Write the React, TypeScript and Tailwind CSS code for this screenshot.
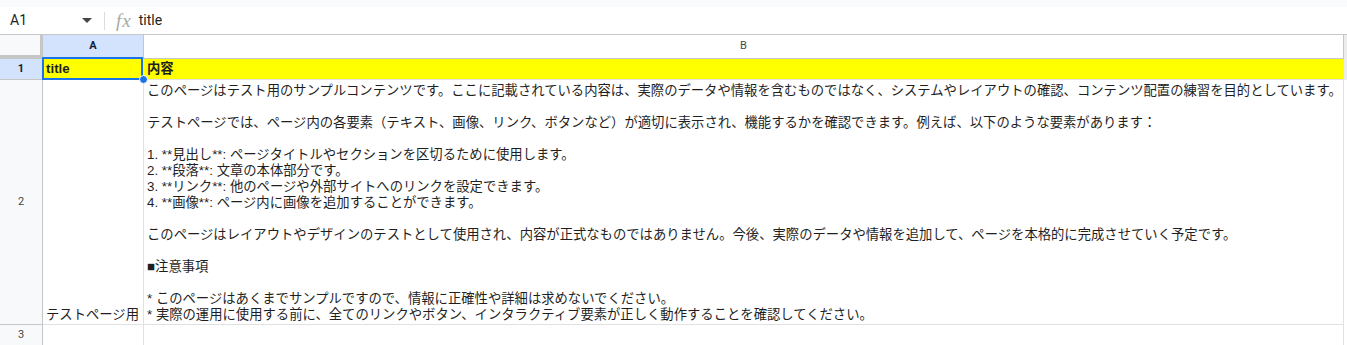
import React from "react";

const cellFont = "font-[family-name:'Liberation_Sans','Noto_Sans_CJK_JP',sans-serif]";

const bText = `このページはテスト用のサンプルコンテンツです。ここに記載されている内容は、実際のデータや情報を含むものではなく、システムやレイアウトの確認、コンテンツ配置の練習を目的としています。

テストページでは、ページ内の各要素（テキスト、画像、リンク、ボタンなど）が適切に表示され、機能するかを確認できます。例えば、以下のような要素があります：

1. **見出し**: ページタイトルやセクションを区切るために使用します。
2. **段落**: 文章の本体部分です。
3. **リンク**: 他のページや外部サイトへのリンクを設定できます。
4. **画像**: ページ内に画像を追加することができます。

このページはレイアウトやデザインのテストとして使用され、内容が正式なものではありません。今後、実際のデータや情報を追加して、ページを本格的に完成させていく予定です。

■注意事項

* このページはあくまでサンプルですので、情報に正確性や詳細は求めないでください。
* 実際の運用に使用する前に、全てのリンクやボタン、インタラクティブ要素が正しく動作することを確認してください。`;

export default function App() {
  return (
    <div className={`w-[1347px] h-[345px] overflow-hidden bg-white ${cellFont} text-[#1f1f1f]`}>
      <div className="h-[7px] bg-[#f9fbfd]" />
      {/* formula bar */}
      <div className="h-[28px] flex items-center border-b border-[#c7c7c7] bg-white">
        <div className="w-[98px] flex items-center pl-[10px] pr-[8px] justify-between">
          <span className="text-[14px] text-[#1f1f1f] font-[family-name:'Roboto','Liberation_Sans',sans-serif]">A1</span>
          <svg width="10" height="5" viewBox="0 0 10 5" className="mr-[-2px]">
            <path d="M0 0 L10 0 L5 5 Z" fill="#444746" />
          </svg>
        </div>
        <div className="w-px h-[18px] bg-[#dadce0] ml-[6px]" />
        <span className="ml-[11px] text-[19px] leading-[19px] italic text-[#a8a8a8] font-[family-name:'Liberation_Serif',serif] tracking-[1px]">fx</span>
        <span className="ml-[7px] text-[14px] text-[#1f1f1f] font-[family-name:'Roboto','Liberation_Sans',sans-serif]">title</span>
      </div>

      {/* column header row */}
      <div className="flex h-[24px]">
        <div className="w-[43px] shrink-0 bg-[#f8f9fa] border-r-[3px] border-b-[4px] border-[#c4c7c5]" />
        <div className="w-[101px] shrink-0 bg-[#d3e3fd] border-r border-b border-[#c4c7c5] flex items-center justify-center text-[11px] font-bold text-[#0b1f3a] font-[family-name:'Roboto','Liberation_Sans',sans-serif]">
          A
        </div>
        <div className="w-[1200px] shrink-0 bg-white border-r border-b border-[#c4c7c5] flex items-center justify-center text-[11px] text-[#444746] font-[family-name:'Roboto','Liberation_Sans',sans-serif]">
          B
        </div>
        <div className="flex-1 bg-[#ececec]" />
      </div>

      {/* row 1 */}
      <div className="flex h-[21px]">
        <div className="w-[43px] shrink-0 bg-[#d3e3fd] border-r border-b border-[#c4c7c5] flex items-center justify-center text-[11px] font-bold text-[#0b1f3a] font-[family-name:'Roboto','Liberation_Sans',sans-serif]">
          1
        </div>
        <div className="relative w-[101px] shrink-0 bg-[#ffff00] border-r border-b border-[#e1e1e1] flex items-end pl-[3px] pb-[2px] text-[13.33px] font-bold leading-[16px]">
          title
          <div className="absolute left-[-1px] top-[-2px] w-[101px] h-[23px] border-2 border-[#1a73e8]" />
          <div className="absolute right-[-5px] bottom-[-5px] w-[9px] h-[9px] rounded-full bg-[#1a73e8] border border-white z-10" />
        </div>
        <div className="w-[1200px] shrink-0 bg-[#ffff00] border-r border-b border-[#e1e1e1] flex items-end pl-[3px] pb-[2px] text-[13.33px] font-bold leading-[16px]">
          内容
        </div>
        <div className="flex-1 bg-[#ececec]" />
      </div>

      {/* row 2 */}
      <div className="flex h-[245px]">
        <div className="w-[43px] shrink-0 bg-[#f8f9fa] border-r border-b border-[#c4c7c5] flex items-center justify-center text-[11px] text-[#444746] font-[family-name:'Roboto','Liberation_Sans',sans-serif]">
          2
        </div>
        <div className="w-[101px] shrink-0 border-r border-b border-[#e1e1e1] flex items-end pl-[3px] pb-[1px] text-[13.33px] leading-[16px] whitespace-nowrap overflow-hidden">
          テストページ用
        </div>
        <div className="w-[1200px] shrink-0 border-r border-b border-[#e1e1e1] flex items-end pl-[3px] pb-[1px] text-[13.33px] leading-[16px] whitespace-pre overflow-hidden">
          {bText}
        </div>
        <div className="flex-1 bg-white" />
      </div>

      {/* row 3 */}
      <div className="flex h-[21px]">
        <div className="w-[43px] shrink-0 bg-[#f8f9fa] border-r border-[#c4c7c5] flex items-center justify-center text-[11px] text-[#444746] font-[family-name:'Roboto','Liberation_Sans',sans-serif]">
          3
        </div>
        <div className="w-[101px] shrink-0 border-r border-[#e1e1e1]" />
        <div className="w-[1200px] shrink-0 border-r border-[#e1e1e1]" />
        <div className="flex-1 bg-white" />
      </div>
    </div>
  );
}
